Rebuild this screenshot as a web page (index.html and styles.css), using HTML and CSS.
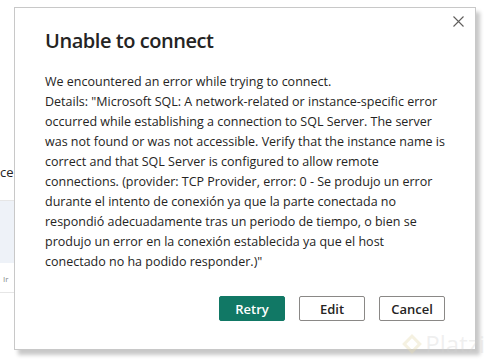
FILE: index.html
```html
<!DOCTYPE html>
<html lang="en">
<head>
  <meta charset="UTF-8" />
  <meta name="viewport" content="width=device-width, initial-scale=1.0"/>
  <title>Unable to connect</title>
  <link rel="stylesheet" href="styles.css">
</head>
<body>

  <!-- page behind the dialog, mostly hidden -->
  <div class="backdrop">
    <div class="source-label">ce</div>
    <div class="source-card">
      <div class="card-top"></div>
      <div class="card-text">Ir</div>
    </div>
  </div>

  <div class="dialog">
    <button class="close-btn" aria-label="Close">
      <svg width="11" height="11" viewBox="0 0 11 11">
        <path d="M0.5 0.5 L10.5 10.5 M10.5 0.5 L0.5 10.5" stroke="#605e5c" stroke-width="1.1" fill="none"/>
      </svg>
    </button>

    <h1>Unable to connect</h1>

    <div class="message">
      <p>We encountered an error while trying to connect.</p>
      <p>Details: "Microsoft SQL: A network-related or instance-specific error<br>
      occurred while establishing a connection to SQL Server. The server<br>
      was not found or was not accessible. Verify that the instance name is<br>
      correct and that SQL Server is configured to allow remote<br>
      connections. (provider: TCP Provider, error: 0 - Se produjo un error<br>
      durante el intento de conexión ya que la parte conectada no<br>
      respondió adecuadamente tras un periodo de tiempo, o bien se<br>
      produjo un error en la conexión establecida ya que el host<br>
      conectado no ha podido responder.)"</p>
    </div>

    <div class="actions">
      <button class="btn btn-primary">Retry</button>
      <button class="btn">Edit</button>
      <button class="btn">Cancel</button>
    </div>
  </div>

  <div class="watermark">
    <span class="logo"></span>Platzi
  </div>

</body>
</html>
```

FILE: styles.css
```css
* {
  box-sizing: border-box;
  margin: 0;
  padding: 0;
}

body {
  width: 489px;
  height: 362px;
  overflow: hidden;
  position: relative;
  background: #fff;
  font-family: "Open Sans", sans-serif;
  color: #252423;
}

.backdrop {
  position: absolute;
  left: 0;
  top: 0;
  width: 100px;
  height: 362px;
}

.source-label {
  position: absolute;
  left: 0;
  top: 163px;
  font-size: 13px;
  white-space: nowrap;
}

.source-card {
  position: absolute;
  left: -40px;
  top: 200px;
  width: 90px;
  height: 93px;
  border: 1px solid #e6e6e6;
  background: #fff;
}

.card-top {
  height: 62px;
  background: #eef2f8;
}

.card-text {
  font-size: 8px;
  color: #888;
  padding: 10px 0 0 42px;
}

.dialog {
  position: absolute;
  left: 14px;
  top: 7px;
  width: 462px;
  height: 343px;
  background: #fff;
  border: 1px solid #c8c8c8;
  box-shadow: 4px 5px 4px rgba(0, 0, 0, 0.22);
  padding: 19px 30px 0 30px;
}

.close-btn {
  position: absolute;
  top: 8px;
  right: 10px;
  width: 12px;
  height: 12px;
  border: none;
  background: none;
  cursor: pointer;
  display: flex;
}

h1 {
  font-size: 20px;
  font-weight: 600;
  line-height: 28px;
  color: #252423;
  letter-spacing: -0.45px;
}

.message {
  margin-top: 17px;
  margin-right: -20px;
  font-size: 12.5px;
  line-height: 20px;
  color: #252423;
  white-space: nowrap;
}

.actions {
  display: flex;
  justify-content: flex-end;
  gap: 14px;
  margin-top: 24px;
}

.btn {
  width: 66px;
  height: 25px;
  border: 1px solid #8a8886;
  border-radius: 2px;
  background: #fff;
  color: #252423;
  font-family: "Open Sans", sans-serif;
  font-size: 13px;
  font-weight: 600;
  cursor: pointer;
}

.btn-primary {
  background: #117865;
  border-color: #117865;
  color: #fff;
}

.watermark {
  position: absolute;
  right: 4px;
  bottom: 2px;
  font-size: 24px;
  color: rgba(210, 210, 210, 0.35);
  display: flex;
  align-items: center;
  gap: 6px;
}

.logo {
  width: 14px;
  height: 14px;
  border: 3px solid rgba(230, 220, 180, 0.4);
  transform: rotate(45deg);
}
```
